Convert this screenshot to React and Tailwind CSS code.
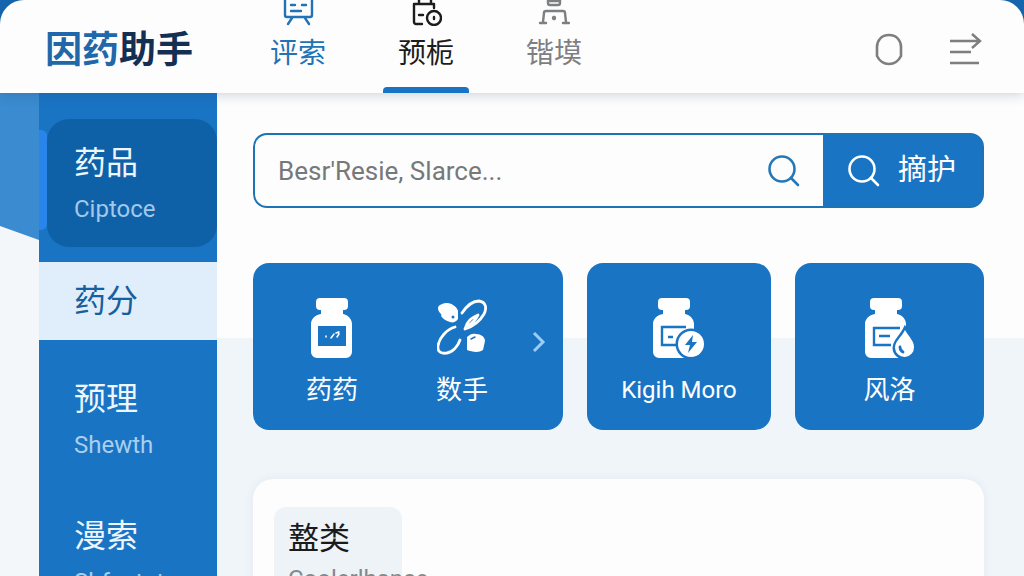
import React from 'react';

const BottleBody = () => (
  <>
    <rect x="5" y="0" width="32" height="12" rx="4" fill="#fff" />
    <path d="M10 10h22v6c5 1 9 5 9 10v28a6 6 0 0 1-6 6H6a6 6 0 0 1-6-6V26c0-5 4-9 10-10z" fill="#fff" />
  </>
);

const BottleIcon = () => (
  <svg width="42" height="60" viewBox="0 0 42 60" aria-hidden="true">
    <BottleBody />
    <rect x="7" y="28" width="28" height="20" fill="#1a74c4" />
    <g stroke="#fff" strokeWidth="1.5" strokeLinecap="round" fill="none">
      <path d="M15 38v1M20 40l3-4M25 35l3-1M27 34l1 2-2 3" />
    </g>
  </svg>
);

const PillsIcon = () => (
  <svg width="50" height="60" viewBox="0 0 50 60" aria-hidden="true">
    <path
      d="M1 10c0-3 5-5 10-5 5 1 9 4 10 8v8c-2 3-5 4-8 3-4-1-7-3-9-6 1-1 0-2-1-3-1-1-2-3-2-5z"
      fill="#fff"
    />
    <circle cx="16" cy="19" r="1.5" fill="#1a74c4" />
    <g stroke="#fff" strokeWidth="2.8" strokeLinecap="round" strokeLinejoin="round" fill="none">
      <path d="M25 15c4-6 10-12 17-12 7 1 8 7 5 13-4 7-10 12-19 15l2-5c2-4 6-7 11-9-2 4-5 8-11 12" />
      <path d="M18 29C10 31 2 40 1 48c-1 6 4 8 9 7 6-1 11-7 13-13" />
    </g>
    <path d="M30 39c3-3 6-4 9-3 5 0 9 3 9 7l-2 9c-4 3-11 2-16 0z" fill="#fff" />
    <path d="M34 41l4-2" stroke="#1a74c4" strokeWidth="1.5" strokeLinecap="round" />
  </svg>
);

const BottleBoltIcon = () => (
  <svg width="52" height="60" viewBox="0 0 52 60" aria-hidden="true">
    <BottleBody />
    <path d="M33 29H9v18h16M15 39h5" stroke="#1a74c4" strokeWidth="2.4" fill="none" />
    <circle cx="38" cy="46" r="15.5" fill="#1a74c4" />
    <circle cx="38" cy="46" r="13" fill="#fff" />
    <path d="M40 37l-8 10h5l-2 8 9-11h-5z" fill="#1a74c4" />
  </svg>
);

const BottleDropIcon = () => (
  <svg width="50" height="60" viewBox="0 0 50 60" aria-hidden="true">
    <BottleBody />
    <path d="M35 30H9v17h17M14 38h11" stroke="#1a74c4" strokeWidth="2.4" fill="none" />
    <path
      d="M40 32c4 7 9 11 9 17a9.5 9.5 0 0 1-19 1c0-7 6-10 10-18z"
      fill="#fff"
      stroke="#1a74c4"
      strokeWidth="5"
      paintOrder="stroke"
    />
    <path d="M35 49c0 3 1 4 3 5" stroke="#1a74c4" strokeWidth="2.8" strokeLinecap="round" fill="none" />
  </svg>
);

const BoardIcon = () => (
  <svg width="32" height="26" viewBox="0 0 32 26" fill="none" stroke="currentColor" strokeWidth="2.4" strokeLinecap="round">
    <path d="M3 0v15a2 2 0 0 0 2 2h23a2 2 0 0 0 2-2V0M9 5h4M9 11h10M20 5h4M10 18l-4 6M23 18l4 6" />
  </svg>
);

const FolderClockIcon = () => (
  <svg width="32" height="26" viewBox="0 0 32 26" fill="none" stroke="currentColor" strokeWidth="2.4" strokeLinecap="round" strokeLinejoin="round">
    <path d="M9 0v4M21 0v4h3v4M12 24H6a2 2 0 0 1-2-2V4h18M9 15h4" />
    <circle cx="24" cy="18" r="7" />
    <path d="M24 17v2" />
  </svg>
);

const StationIcon = () => (
  <svg width="32" height="26" viewBox="0 0 32 26" fill="none" stroke="currentColor" strokeWidth="2.4" strokeLinecap="round">
    <path d="M10 0v3a2 2 0 0 0 2 2h8a2 2 0 0 0 2-2V0M11 1h10M5 22l1-9a2 2 0 0 1 2-2h17a2 2 0 0 1 2 2l1 9M2 23h6M25 23h6M16 17v2" />
    <circle cx="16" cy="18" r="1" />
  </svg>
);

const SearchIcon = () => (
  <svg width="34" height="34" viewBox="0 0 34 34" fill="none" stroke="currentColor" strokeWidth="2.6" strokeLinecap="round" aria-hidden="true">
    <circle cx="15" cy="15" r="12.5" />
    <path d="M24 24l7 7" />
  </svg>
);

const tabs = [
  { label: '评索', icon: BoardIcon, className: 'text-[#2273b5]' },
  { label: '预栀', icon: FolderClockIcon, className: 'text-[#1c1c1e]', active: true },
  { label: '锴塻', icon: StationIcon, className: 'text-[#7d7f82]' },
];

const cardClass = 'rounded-2xl bg-[#1a74c4] pt-[35px] pb-5 text-white';

function Shortcut({ icon: Icon, label, labelClass = 'text-[26px]' }) {
  return (
    <a href="#" className="flex min-w-[90px] flex-col items-center gap-3">
      <Icon />
      <span className={`leading-10 whitespace-nowrap ${labelClass}`}>{label}</span>
    </a>
  );
}

function Header() {
  return (
    <div className="relative z-10 bg-linear-to-b from-[#1567b0] from-50% to-transparent to-50%">
      <header className="flex items-end rounded-t-[24px] bg-[#fdfdfd] pr-[42px] pl-[45px] shadow-[0_2px_12px_rgba(40,60,90,0.22)]">
        <h1 className="mb-[18px] text-[37px] leading-12 font-bold whitespace-nowrap text-[#142f54]">
          <span className="text-[#2068aa]">因药</span>助手
        </h1>
        <nav className="ml-[62px] flex gap-[42px]">
          {tabs.map(({ label, icon: Icon, className, active }) => (
            <a key={label} href="#" className={`flex w-[86px] flex-col items-center ${className}`}>
              <Icon />
              <span className="mt-2 mb-[13px] text-[28px] leading-10">{label}</span>
              <span className={`h-1.5 w-full rounded-t ${active ? 'bg-[#1a74c4]' : ''}`} />
            </a>
          ))}
        </nav>
        <div className="mb-[27px] ml-auto flex items-center gap-11 text-[#7e7e7e]">
          <button type="button" aria-label="Account">
            <svg width="32" height="34" viewBox="0 0 32 34" fill="none" stroke="currentColor" strokeWidth="2.6">
              <path d="M17 3C9 3 5 9 5 15v9c2 4 6 8 12 8s10-4 12-8v-9C29 9 25 3 17 3z" />
            </svg>
          </button>
          <button type="button" aria-label="Menu">
            <svg width="34" height="34" viewBox="0 0 34 34" fill="none" stroke="currentColor" strokeWidth="2.4">
              <path d="M2 9h30M24 2l8 7-8 7M2 20h21M2 31h29" />
            </svg>
          </button>
        </div>
      </header>
    </div>
  );
}

function Sidebar() {
  return (
    <aside className="flex w-[178px] shrink-0 flex-col gap-[15px] bg-[#1a74c4] pt-[26px] text-[#eef6fd]">
      <div className="flex items-start">
        <span className="mt-[11px] h-[100px] w-2 rounded-r-md bg-[#2a85ea]" />
        <a href="#" className="flex-1 rounded-[22px] bg-[#0f61a7] pt-6 pb-[22px] pl-[27px]">
          <div className="text-[32px] leading-10">药品</div>
          <div className="mt-2.5 text-2xl leading-8 text-[#a3c8e8]">Ciptoce</div>
        </a>
      </div>
      <a href="#" className="bg-[#dfeefa] py-[19px] pl-[35px] text-[32px] leading-10 text-[#175f9e]">
        药分
      </a>
      <a href="#" className="pt-6 pb-4 pl-[35px]">
        <div className="text-[32px] leading-10">预理</div>
        <div className="mt-2.5 text-2xl leading-8 text-[#a9cfef]">Shewth</div>
      </a>
      <a href="#" className="pt-6 pb-4 pl-[35px]">
        <div className="text-[32px] leading-10">漫索</div>
        <div className="mt-2.5 text-2xl leading-8 text-[#a9cfef]">Shfactut</div>
      </a>
    </aside>
  );
}

export default function App() {
  return (
    <div className="flex h-screen flex-col overflow-hidden bg-[#f3f7fa] font-[Roboto,'Noto_Sans_CJK_SC',sans-serif]">
      <Header />
      <div className="flex flex-1">
        {/* Fondo decorativo */}
        <div className="w-[39px] shrink-0">
          <svg width="39" height="147" viewBox="0 0 39 147" aria-hidden="true">
            <path d="M0 0h39v147L0 133z" fill="#3a8bd0" />
          </svg>
        </div>

        <Sidebar />

        <main className="flex min-w-0 flex-1 flex-col bg-[linear-gradient(#fdfdfd_245px,#f0f5fa_245px)] pt-10 pr-10 pl-9">
          {/* Buscador */}
          <form className="flex rounded-[14px] border-2 border-[#1c74b5] bg-[#1a74c4]" onSubmit={(e) => e.preventDefault()}>
            <label className="flex min-w-0 flex-1 items-center rounded-l-xl bg-[#fdfdfd] pr-[22px] pl-[23px] text-[#2478b8]">
              <input
                type="text"
                aria-label="Search"
                placeholder="Besr'Resie, Slarce..."
                className="min-w-0 flex-1 text-[26px] leading-8 text-[#6f6f70] outline-none placeholder:text-[#77787a]"
              />
              <SearchIcon />
            </label>
            <button type="submit" className="flex items-center gap-[17px] py-[15px] pr-[26px] pl-6 text-[29px] leading-[41px] text-white">
              <SearchIcon />
              摘护
            </button>
          </form>

          {/* Accesos */}
          <div className="mt-[55px] grid grid-cols-[310fr_184fr_189fr] gap-6">
            <div className={`flex pl-[34px] ${cardClass}`}>
              <Shortcut icon={BottleIcon} label="药药" />
              <div className="ml-10">
                <Shortcut icon={PillsIcon} label="数手" />
              </div>
              <button type="button" aria-label="Next" className="mt-8 ml-6 self-start text-[#9ccbf3]">
                <svg width="16" height="24" viewBox="0 0 16 24" fill="none" stroke="currentColor" strokeWidth="3">
                  <path d="M3 3l9 9-9 9" />
                </svg>
              </button>
            </div>
            <div className={`flex justify-center ${cardClass}`}>
              <Shortcut icon={BottleBoltIcon} label="Kigih Moro" labelClass="text-2xl" />
            </div>
            <div className={`flex justify-center ${cardClass}`}>
              <Shortcut icon={BottleDropIcon} label="风洛" />
            </div>
          </div>

          {/* Panel de categorías */}
          <section className="mt-[49px] flex-1 rounded-t-[20px] bg-[#fdfdfd] px-[21px] pt-7 shadow-[0_0_10px_rgba(60,90,130,0.08)]">
            <div className="w-32 rounded-xl bg-[#eef3f8] px-3.5 pt-3">
              <h2 className="text-[31px] leading-10 text-[#1b1b1b]">盩类</h2>
              <p className="mt-1 text-2xl leading-8 whitespace-nowrap text-[#85888c]">Coolerlhance</p>
            </div>
          </section>
        </main>
      </div>
    </div>
  );
}
